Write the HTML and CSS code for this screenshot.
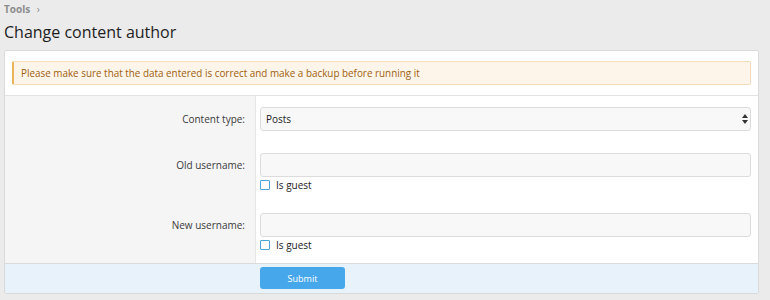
FILE: index.html
```html
<!DOCTYPE html>
<html lang="en">
<head>
  <meta charset="utf-8">
  <title>Change content author</title>
  <link rel="stylesheet" href="styles.css">
</head>
<body>
  <div class="crumbs">
    <a href="#">Tools</a>
    <span class="crumb-sep">&rsaquo;</span>
  </div>
  <h1 class="page-title">Change content author</h1>

  <form class="block">
    <div class="notice">Please make sure that the data entered is correct and make a backup before running it</div>

    <div class="form-rows">
      <div class="row row-first">
        <label class="row-label">Content type:</label>
        <div class="row-input">
          <div class="select-wrap">
            <select class="field">
              <option>Posts</option>
              <option>Threads</option>
            </select>
            <svg class="select-arrow" width="6" height="10" viewBox="0 0 6 10">
              <path d="M0 4 L3 0 L6 4 Z M0 6 L3 10 L6 6 Z" fill="#333"/>
            </svg>
          </div>
        </div>
      </div>

      <div class="row">
        <label class="row-label">Old username:</label>
        <div class="row-input">
          <input class="field" type="text">
          <label class="check"><span class="check-box"></span>Is guest</label>
        </div>
      </div>

      <div class="row row-last">
        <label class="row-label">New username:</label>
        <div class="row-input">
          <input class="field" type="text">
          <label class="check"><span class="check-box"></span>Is guest</label>
        </div>
      </div>
    </div>

    <div class="form-footer">
      <div class="footer-spacer"></div>
      <button type="button" class="button">Submit</button>
    </div>
  </form>
</body>
</html>
```

FILE: styles.css
```css
body {
  margin: 0;
  padding: 0 11px 0 4px;
  background: #ebebeb;
  font-family: "Open Sans", "Noto Sans", sans-serif;
  color: #333;
}
.crumbs {
  height: 18px;
  line-height: 18px;
  font-size: 10px;
  font-weight: bold;
  color: #8c8c8c;
}
.crumbs a {
  color: #8c8c8c;
  text-decoration: none;
}
.crumb-sep {
  margin-left: 4px;
  font-weight: normal;
}
.page-title {
  margin: 0;
  height: 32px;
  line-height: 28px;
  font-size: 16px;
  font-weight: normal;
  color: #1d1d1d;
}
.block {
  background: #fff;
  border: 1px solid #dadada;
  border-radius: 2px;
}
.notice {
  margin: 10px 7px;
  height: 22px;
  line-height: 22px;
  padding-left: 7px;
  font-size: 9.9px;
  color: #a0600e;
  background: #fef5ea;
  border: 1px solid #f2dcbc;
  border-left: 2px solid #e8b45a;
  border-radius: 2px;
}
.form-rows {
  border-top: 1px solid #e3e3e3;
}
.row {
  display: grid;
  grid-template-columns: 251px 1fr;
}
.row-label {
  background: #f5f5f5;
  border-right: 1px solid #e6e6e6;
  text-align: right;
  padding: 22px 10px 0 0;
  line-height: 24px;
  font-size: 10px;
  color: #3a3a3a;
}
.row-input {
  padding: 22px 7px 0 4px;
}
.row-first .row-label,
.row-first .row-input {
  padding-top: 11px;
}
.row-last .row-label,
.row-last .row-input {
  padding-top: 20px;
  padding-bottom: 10px;
}
.field {
  display: block;
  box-sizing: border-box;
  width: 100%;
  height: 24px;
  margin: 0;
  padding: 0 5px;
  font-family: inherit;
  font-size: 10px;
  color: #222;
  background: #f8f8f8;
  border: 1px solid #dcdcdc;
  border-radius: 3px;
  outline: none;
  appearance: none;
  -webkit-appearance: none;
}
.select-wrap {
  position: relative;
}
.select-arrow {
  position: absolute;
  right: 3px;
  top: 7px;
}
.check {
  display: flex;
  align-items: center;
  height: 16px;
  margin-top: 0;
  font-size: 10px;
  color: #222;
}
.check-box {
  box-sizing: border-box;
  width: 10px;
  height: 10px;
  margin-right: 6px;
  border: 1px solid #4aa3d9;
  border-radius: 1px;
  background: #fff;
}
.form-footer {
  display: grid;
  grid-template-columns: 255px 1fr;
  padding: 3px 0 4px;
  background: #e8f2fb;
  border-top: 1px solid #dadada;
}
.button {
  width: 85px;
  height: 22px;
  padding: 0;
  font-family: inherit;
  font-size: 9px;
  color: #fff;
  background: #47a7eb;
  border: 0;
  border-radius: 3px;
}
```
